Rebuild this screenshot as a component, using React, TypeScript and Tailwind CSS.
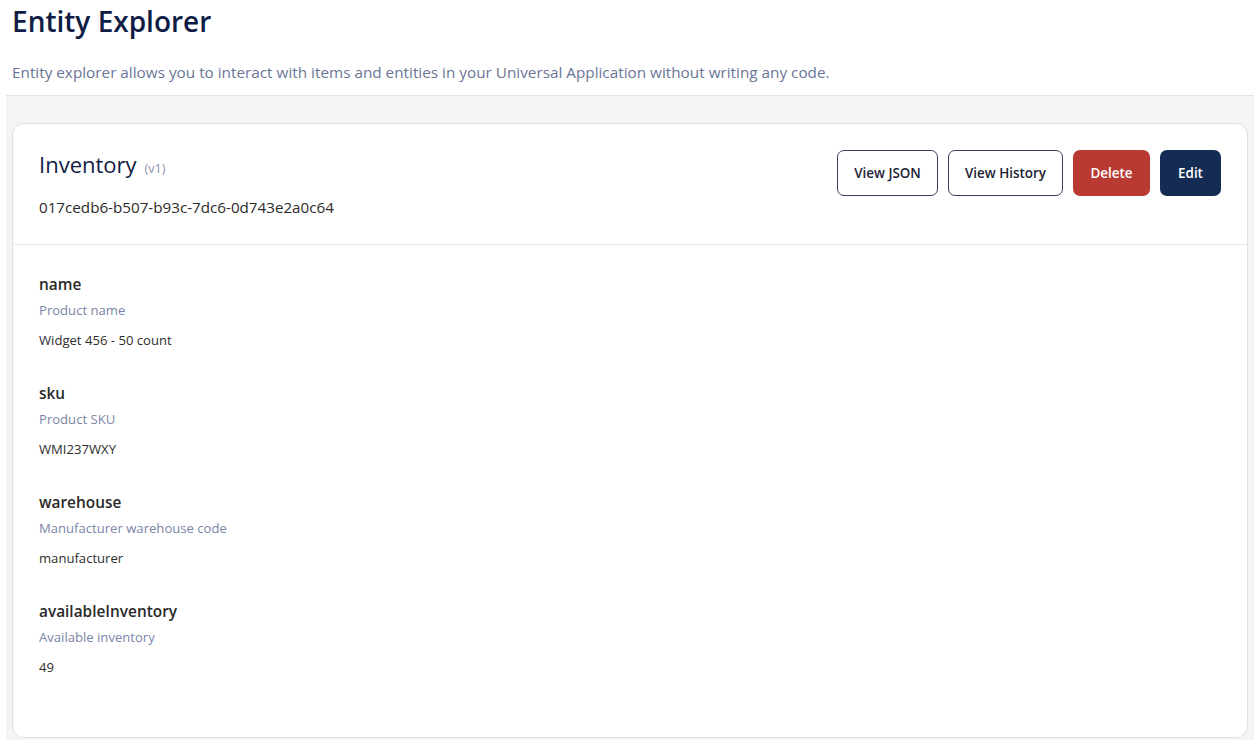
import React from "react";

const fields = [
  { key: "name", desc: "Product name", value: "Widget 456 - 50 count" },
  { key: "sku", desc: "Product SKU", value: "WMI237WXY" },
  { key: "warehouse", desc: "Manufacturer warehouse code", value: "manufacturer" },
  { key: "availableInventory", desc: "Available inventory", value: "49" },
];

export default function App() {
  return (
    <div className="w-[1258px] h-[740px] overflow-hidden bg-white font-['Open_Sans',sans-serif]">
      <div className="ml-[6px] mr-[4px] h-full flex flex-col">
        <header className="shrink-0 bg-white border-b border-[#e3e5ea] pl-[6px] h-[96px]">
          <h1 className="text-[28px] leading-[40px] pt-[1px] font-semibold text-[#0f1d44]">Entity Explorer</h1>
          <p className="mt-[19px] text-[15.3px] leading-[24px] text-[#6a7596]">
            Entity explorer allows you to interact with items and entities in your Universal Application without writing any code.
          </p>
        </header>
        <main className="flex-1 bg-[#f3f4f6] pt-[27px] px-[6px]">
          <div className="bg-white border border-[#dfe1e6] rounded-[12px] h-[615px]">
            <div className="flex justify-between items-start px-[26px] pt-[26px] pb-[25px] border-b border-[#e3e5ea]">
              <div>
                <div className="flex items-baseline gap-[8px]">
                  <span className="text-[22px] leading-[28px] text-[#0f1d44]">Inventory</span>
                  <span className="text-[12.5px] text-[#8a93ab]">(v1)</span>
                </div>
                <div className="mt-[16px] text-[15.2px] leading-[24px] text-[#2b2b2b]">017cedb6-b507-b93c-7dc6-0d743e2a0c64</div>
              </div>
              <div className="flex gap-[10px]">
                <button className="h-[46px] w-[101px] rounded-[7px] border border-[#3a3f5e] text-[13.4px] font-semibold text-[#1c2236] bg-white">View JSON</button>
                <button className="h-[46px] w-[115px] rounded-[7px] border border-[#3a3f5e] text-[13.4px] font-semibold text-[#1c2236] bg-white">View History</button>
                <button className="h-[46px] w-[77px] rounded-[7px] text-[13.4px] font-semibold text-white bg-[#b83a33]">Delete</button>
                <button className="h-[46px] w-[61px] rounded-[7px] text-[13.4px] font-semibold text-white bg-[#142c54]">Edit</button>
              </div>
            </div>
            <div className="px-[26px] pt-[29px] flex flex-col gap-[33px]">
              {fields.map((f) => (
                <div key={f.key}>
                  <div className="text-[15.4px] leading-[22px] font-semibold text-[#2a2a2a]">{f.key}</div>
                  <div className="mt-[4px] text-[13.1px] leading-[20px] text-[#7a85a6]">{f.desc}</div>
                  <div className="mt-[10px] text-[13.1px] leading-[20px] text-[#2e2e2e]">{f.value}</div>
                </div>
              ))}
            </div>
          </div>
        </main>
      </div>
    </div>
  );
}
